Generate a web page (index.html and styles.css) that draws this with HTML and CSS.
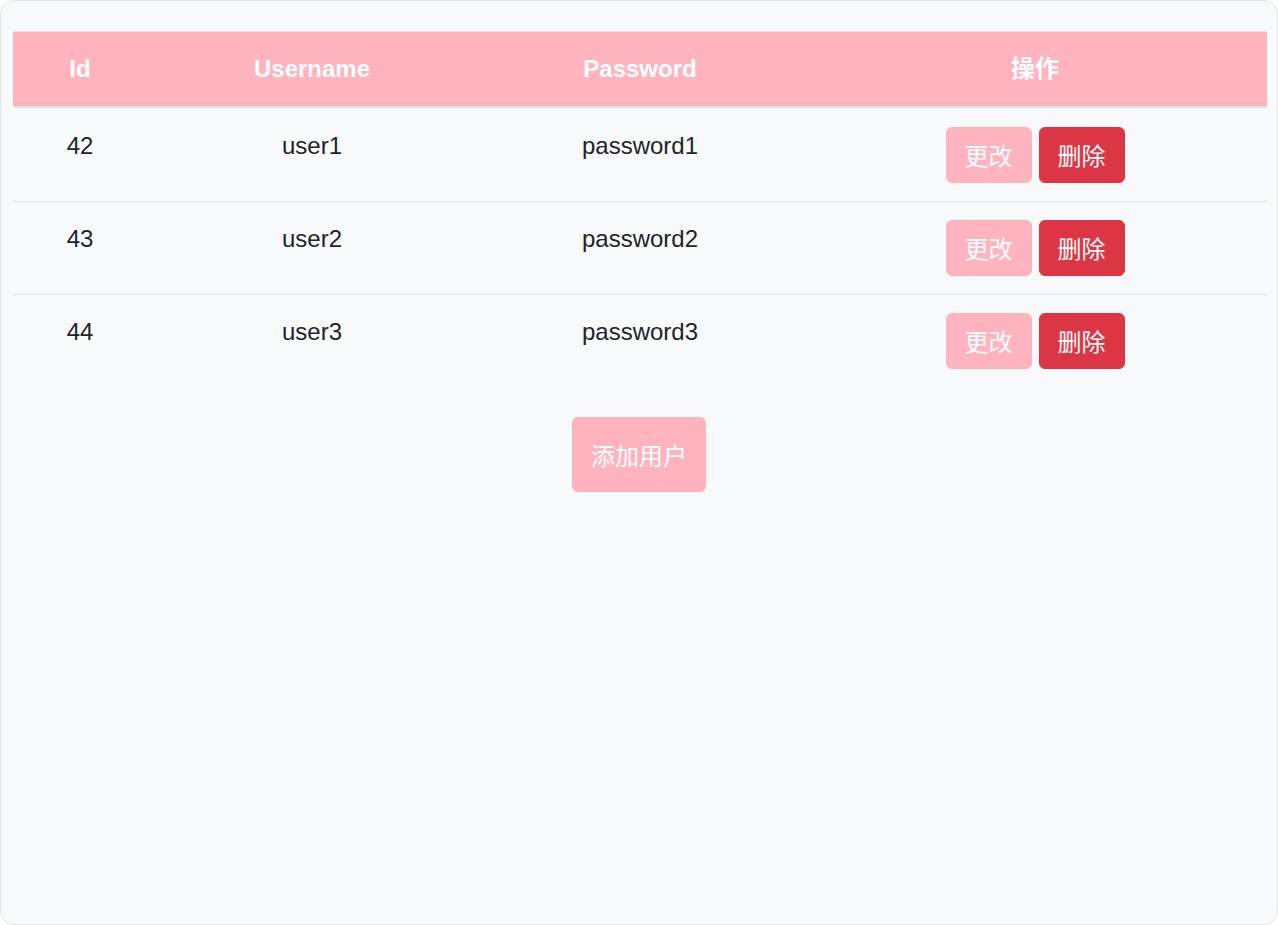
FILE: index.html
```html
<!DOCTYPE html>
<html lang="zh">
<head>
<meta charset="utf-8">
<title>Users</title>
<link rel="stylesheet" href="styles.css">
</head>
<body>
<div class="panel">
  <table class="user-table">
    <colgroup>
      <col class="c-id"><col class="c-name"><col class="c-pass"><col class="c-ops">
    </colgroup>
    <thead>
      <tr><th>Id</th><th>Username</th><th>Password</th><th>操作</th></tr>
    </thead>
    <tbody>
      <tr>
        <td>42</td><td>user1</td><td>password1</td>
        <td><div class="ops"><button class="btn btn-pink">更改</button><button class="btn btn-red">删除</button></div></td>
      </tr>
      <tr>
        <td>43</td><td>user2</td><td>password2</td>
        <td><div class="ops"><button class="btn btn-pink">更改</button><button class="btn btn-red">删除</button></div></td>
      </tr>
      <tr>
        <td>44</td><td>user3</td><td>password3</td>
        <td><div class="ops"><button class="btn btn-pink">更改</button><button class="btn btn-red">删除</button></div></td>
      </tr>
    </tbody>
  </table>
  <div class="add-row">
    <button class="btn btn-pink btn-add">添加用户</button>
  </div>
</div>
</body>
</html>
```
FILE: styles.css
```css
* { box-sizing: border-box; }
html, body { margin: 0; padding: 0; }
body {
  font-family: "Liberation Sans", Arial, "Noto Sans CJK SC", sans-serif;
  color: #212529;
  background: #ffffff;
}
.panel {
  height: 925px;
  background: #f8f9fa;
  border: 1px solid #e3e5e8;
  border-radius: 14px;
  padding: 12px;
}
.user-table {
  width: 1254px;
  margin-top: 18px;
  border-collapse: collapse;
  table-layout: fixed;
  font-size: 24px;
  line-height: 38px;
}
.c-id { width: 134px; }
.c-name { width: 330px; }
.c-pass { width: 326px; }
.c-ops { width: 464px; }
.user-table th {
  background: #ffb3bf;
  color: #ffffff;
  font-weight: bold;
  text-align: center;
  line-height: 36px;
  padding: 19px 18px 19px;
  border-top: 1px solid #dee2e6;
  border-bottom: 2px solid #dee2e6;
}
.user-table td {
  text-align: center;
  vertical-align: top;
  padding: 19px 18px 18px;
  border-top: 1px solid #dee2e6;
}
.user-table tbody tr + tr td { padding-top: 18px; padding-bottom: 18px; }
.ops {
  display: flex;
  justify-content: center;
  gap: 7px;
}
.btn {
  font-family: "Noto Sans CJK SC", "Liberation Sans", sans-serif;
  font-size: 24px;
  line-height: 36px;
  height: 56px;
  padding: 0 18px;
  border: 1px solid transparent;
  border-radius: 6px;
  color: #ffffff;
  cursor: pointer;
}
.btn-pink { background: #ffb3bf; border-color: #ffb3bf; }
.btn-red { background: #dc3545; border-color: #dc3545; }
.add-row {
  display: flex;
  justify-content: center;
  margin-top: 30px;
}
.btn-add { height: 75px; width: 134px; }
```
